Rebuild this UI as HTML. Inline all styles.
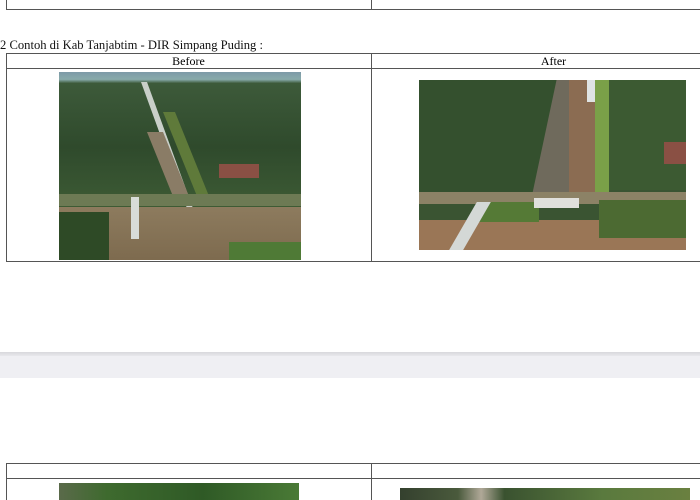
<!DOCTYPE html>
<html><head><style>
body{margin:0;width:700px;height:500px;overflow:hidden;background:#fff;position:relative;font-family:"Liberation Serif",serif;}
.a{position:absolute;}
.ln{position:absolute;background:#555;}
</style></head><body>
<div class="ln" style="left:6px;top:0;width:1px;height:10px"></div>
<div class="ln" style="left:371px;top:0;width:1px;height:10px"></div>
<div class="ln" style="left:6px;top:9px;width:694px;height:1px"></div>

<div class="a" style="left:0;top:38px;font-size:12.6px;color:#111;">2 Contoh di Kab Tanjabtim - DIR Simpang Puding :</div>

<div class="ln" style="left:6px;top:53px;width:694px;height:1px"></div>
<div class="ln" style="left:6px;top:68px;width:694px;height:1px"></div>
<div class="ln" style="left:6px;top:261px;width:694px;height:1px"></div>
<div class="ln" style="left:6px;top:53px;width:1px;height:209px"></div>
<div class="ln" style="left:371px;top:53px;width:1px;height:209px"></div>
<div class="a" style="left:6px;top:54px;width:365px;text-align:center;font-size:12px;">Before</div>
<div class="a" style="left:371px;top:54px;width:365px;text-align:center;font-size:12px;">After</div>

<div class="a" style="left:59px;top:72px;width:242px;height:188px;overflow:hidden;background:linear-gradient(#7d9aa8 0,#8aa 4%,#3d5a3a 6%,#2f4a2c 40%,#3c5a34 70%,#5b6a3c 100%);">
 <div class="a" style="left:82px;top:10px;width:6px;height:140px;background:#c9cfc9;transform:skewX(20deg);transform-origin:top left;"></div>
 <div class="a" style="left:88px;top:60px;width:16px;height:70px;background:#8a7c66;transform:skewX(22deg);transform-origin:top left;"></div>
 <div class="a" style="left:104px;top:40px;width:12px;height:90px;background:#5f7a3a;transform:skewX(22deg);transform-origin:top left;"></div>
 <div class="a" style="left:0;top:135px;width:242px;height:55px;background:linear-gradient(#8d7b5e,#7d6a4e);"></div>
 <div class="a" style="left:0;top:122px;width:242px;height:12px;background:#6d7a54;"></div>
 <div class="a" style="left:72px;top:125px;width:8px;height:42px;background:#d8dcd8;"></div>
 <div class="a" style="left:160px;top:92px;width:40px;height:14px;background:#8a5044;"></div>
 <div class="a" style="left:0;top:140px;width:50px;height:48px;background:#2e4a26;"></div>
 <div class="a" style="left:170px;top:170px;width:72px;height:20px;background:#4f7a36;"></div>
</div>

<div class="a" style="left:419px;top:80px;width:267px;height:170px;overflow:hidden;background:#3a5432;">
 <div class="a" style="left:0;top:0;width:150px;height:115px;background:#34502e;"></div>
 <div class="a" style="left:185px;top:0;width:82px;height:110px;background:#3c5a32;"></div>
 <div class="a" style="left:125px;top:0;width:45px;height:118px;background:#6f6a5c;transform:skewX(-12deg);"></div>
 <div class="a" style="left:150px;top:0;width:28px;height:118px;background:#8b6c52;"></div>
 <div class="a" style="left:168px;top:0;width:12px;height:22px;background:#dfe3e3;"></div>
 <div class="a" style="left:176px;top:0;width:14px;height:118px;background:#7aa048;"></div>
 <div class="a" style="left:0;top:112px;width:267px;height:12px;background:#8c8266;"></div>
 <div class="a" style="left:0;top:140px;width:267px;height:30px;background:#9a7656;"></div>
 <div class="a" style="left:60px;top:122px;width:60px;height:20px;background:#557a36;"></div>
 <div class="a" style="left:44px;top:122px;width:14px;height:48px;background:#d4d8d6;transform:skewX(-30deg);"></div>
 <div class="a" style="left:115px;top:118px;width:45px;height:10px;background:#e0e0dc;"></div>
 <div class="a" style="left:245px;top:62px;width:22px;height:22px;background:#8a5044;"></div>
 <div class="a" style="left:180px;top:120px;width:87px;height:38px;background:#4c6a32;"></div>
</div>

<div class="a" style="left:0;top:352px;width:700px;height:4px;background:linear-gradient(#d8d8dc,#e8e8ec);"></div>
<div class="a" style="left:0;top:356px;width:700px;height:22px;background:#efeff3;"></div>

<div class="ln" style="left:6px;top:463px;width:694px;height:1px"></div>
<div class="ln" style="left:6px;top:478px;width:694px;height:1px"></div>
<div class="ln" style="left:6px;top:463px;width:1px;height:37px"></div>
<div class="ln" style="left:371px;top:463px;width:1px;height:37px"></div>
<div class="a" style="left:59px;top:483px;width:240px;height:17px;background:linear-gradient(90deg,#5a6a4a,#3e6a2e 20%,#2f5a26 60%,#4a7a36);"></div>
<div class="a" style="left:400px;top:488px;width:290px;height:12px;background:linear-gradient(90deg,#34402e,#4a5a3c 20%,#b0a898 28%,#3a5230 36%,#5a7a3e 70%,#6a8040);"></div>
</body></html>
